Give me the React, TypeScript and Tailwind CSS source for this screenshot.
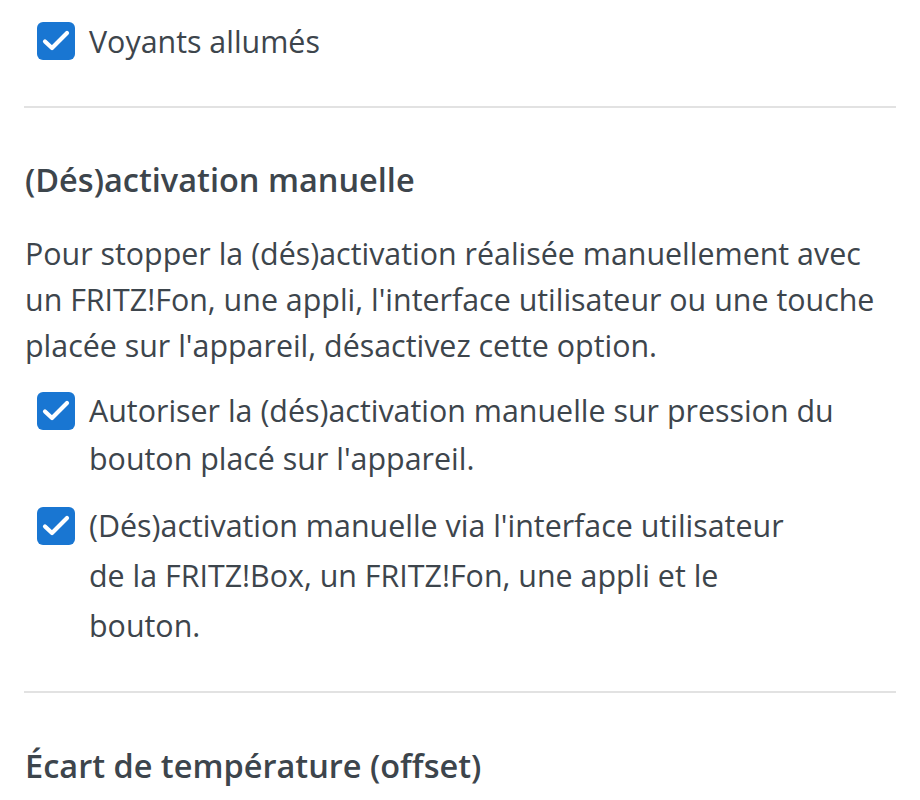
import React from 'react';

function Check({ checked = true }: { checked?: boolean }) {
  return (
    <span
      className={`relative block flex-none w-[38px] h-[38px] rounded-[6px] ${checked ? 'bg-[#1976d2]' : 'border-2 border-gray-400'}`}
    >
      {checked && (
        <svg className="absolute inset-0" width="38" height="38" viewBox="0 0 38 38" fill="none">
          <path d="M8 19.5l7 6.5L30 11" stroke="white" strokeWidth={4.2} strokeLinecap="round" strokeLinejoin="round" />
        </svg>
      )}
    </span>
  );
}

function CheckRow({
  children,
  className = '',
  lh = 'leading-[48px]',
  boxTop = 'pt-[5px]',
}: {
  children: React.ReactNode;
  className?: string;
  lh?: string;
  boxTop?: string;
}) {
  return (
    <label className={`flex items-start gap-[14px] pl-[13px] ${className}`}>
      <span className={`block flex-none ${boxTop}`}>
        <Check />
      </span>
      <span className={lh}>{children}</span>
    </label>
  );
}

export default function App() {
  return (
    <div
      className="w-full h-[800px] overflow-hidden bg-white text-[#3d454c] text-[30.4px] px-[24px]"
      style={{ fontFamily: '"Open Sans", "Noto Sans", sans-serif' }}
    >
      {/* Voyants */}
      <CheckRow className="pt-[19px]" lh="leading-[46px]" boxTop="pt-[3px]">
        Voyants allumés
      </CheckRow>

      <hr className="mt-[41px] border-0 h-[2px] bg-[#e2e2e2]" />

      {/* Manual switching */}
      <section className="pt-[52px]">
        <h2 className="text-[32.5px] font-semibold leading-[40px] pl-[1px]">(Dés)activation manuelle</h2>
        <p className="mt-[31px] leading-[46px] pl-[1px]">
          Pour stopper la (dés)activation réalisée manuellement avec
          <br />
          un FRITZ!Fon, une appli, l'interface utilisateur ou une touche
          <br />
          placée sur l'appareil, désactivez cette option.
        </p>
        <CheckRow className="mt-[18px]">
          Autoriser la (dés)activation manuelle sur pression du
          <br />
          bouton placé sur l'appareil.
        </CheckRow>
        <CheckRow className="mt-[18px]" lh="leading-[50px]" boxTop="pt-[6px]">
          (Dés)activation manuelle via l'interface utilisateur
          <br />
          de la FRITZ!Box, un FRITZ!Fon, une appli et le
          <br />
          bouton.
        </CheckRow>
      </section>

      <hr className="mt-[40px] border-0 h-[2px] bg-[#e2e2e2]" />

      <section className="pt-[53px]">
        <h2 className="text-[32.5px] font-semibold leading-[40px] pl-[1px]">Écart de température (offset)</h2>
      </section>
    </div>
  );
}
